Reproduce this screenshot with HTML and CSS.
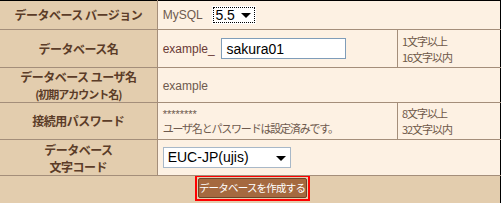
FILE: index.html
```html
<!DOCTYPE html>
<html lang="ja">
	<head>
		<meta charset="UTF-8">
		<title>データベース作成</title>
		<link rel="stylesheet" href="styles.css">
	</head>
	<body>
		<table class="form-table">
			<colgroup>
				<col class="col-label">
				<col class="col-value">
				<col class="col-note">
			</colgroup>
			<tr class="row-version">
				<th>データベース バージョン</th>
				<td colspan="2">
					<span class="prefix">MySQL</span>
					<span class="select select-version">5.5<span class="arrow"></span></span>
				</td>
			</tr>
			<tr class="row-name">
				<th>データベース名</th>
				<td>
					<span class="prefix prefix-name">example_</span>
					<input class="text-input" type="text" value="sakura01">
				</td>
				<td class="note">1文字以上<br>16文字以内</td>
			</tr>
			<tr class="row-user">
				<th class="two-line">データベース ユーザ名<br><span class="sub">(初期アカウント名)</span></th>
				<td colspan="2"><span class="prefix">example</span></td>
			</tr>
			<tr class="row-pass">
				<th>接続用パスワード</th>
				<td>
					<div class="stars">********</div>
					<div class="small">ユーザ名とパスワードは設定済みです。</div>
				</td>
				<td class="note">8文字以上<br>32文字以内</td>
			</tr>
			<tr class="row-code">
				<th class="two-line">データベース<br>文字コード</th>
				<td colspan="2">
					<span class="select select-code">EUC-JP(ujis)<span class="arrow"></span></span>
				</td>
			</tr>
			<tr class="row-submit">
				<td colspan="3" class="submit-cell">
					<div class="submit-wrap">
						<span class="focus-box"><button class="submit">データベースを作成する</button></span>
					</div>
				</td>
			</tr>
		</table>
	</body>
</html>
```

FILE: styles.css
```css
body {
	margin: 0;
	background-color: #ffffff;
	font-family: "Noto Sans CJK JP", "DejaVu Sans", sans-serif;
}
.form-table {
	width: 501px;
	border-collapse: collapse;
	border-top: 1px solid #000000;
	border-right: 1px solid #000000;
	border-bottom: 1px solid #000000;
	table-layout: fixed;
}
.col-label { width: 157px; }
.col-value { width: 240px; }
.col-note { width: 103px; }
.form-table th,
.form-table td {
	padding: 0;
	border-bottom: 1px solid #a48e7a;
	font-size: 12px;
	line-height: 14px;
	white-space: nowrap;
	overflow: hidden;
}
.form-table th {
	background-color: #e3cdae;
	color: #5b3c28;
	font-weight: bold;
	text-align: center;
	border-right: 1px solid #a48e7a;
	letter-spacing: -0.5px;
}
.form-table th.two-line {
	line-height: 17px;
}
.form-table th.two-line .sub {
	line-height: 16px;
}
.form-table td {
	background-color: #fdf1e3;
	color: #6b4a3a;
	padding-left: 5px;
}
.form-table td.note {
	border-left: 1px solid #a48e7a;
	padding-left: 4px;
	font-size: 11px;
	line-height: 16px;
	color: #6e5848;
	letter-spacing: -1px;
}
.row-version th, .row-version td { height: 28px; }
.row-name th, .row-name td { height: 37px; }
.row-user th, .row-user td { height: 33px; }
.row-pass th, .row-pass td { height: 36px; }
.row-code th, .row-code td { height: 35px; }
.row-submit td { height: 27px; border-bottom: none; }
.prefix {
	font-family: "Liberation Sans", Arial, sans-serif;
	font-size: 12px;
	color: #6e5a4e;
	vertical-align: middle;
}
.prefix-name {
	color: #6a3a36;
	margin-right: 4px;
}
.sub {
	font-size: 11px;
	letter-spacing: -1px;
}
.select {
	display: inline-block;
	position: relative;
	vertical-align: middle;
	box-sizing: border-box;
	height: 18px;
	background-color: #ffffff;
	font-family: "Liberation Sans", Arial, sans-serif;
	font-size: 14px;
	line-height: 16px;
	color: #000000;
	border: 1px solid #a8b8c8;
}
.select-version {
	width: 44px;
	margin-left: 7px;
	padding-left: 2px;
	outline: 1px dotted #000000;
	outline-offset: -2px;
	border-color: #ffffff;
}
.select-code {
	width: 128px;
	height: 21px;
	padding: 1px 0 0 4px;
}
.select-code .arrow {
	top: 8px;
}
.arrow {
	position: absolute;
	right: 4px;
	top: 6px;
	width: 0;
	height: 0;
	border-left: 5px solid transparent;
	border-right: 5px solid transparent;
	border-top: 5px solid #000000;
}
.text-input {
	box-sizing: border-box;
	width: 125px;
	height: 21px;
	padding: 0 4px;
	vertical-align: middle;
	border: 1px solid #7f9db9;
	font-family: "Liberation Sans", Arial, sans-serif;
	font-size: 14px;
	color: #000000;
}
.stars {
	font-family: "Liberation Sans", Arial, sans-serif;
	font-size: 11px;
	line-height: 12px;
	color: #6e5a4e;
	margin-top: 2px;
}
.small {
	font-size: 11px;
	line-height: 16px;
	letter-spacing: -1.2px;
	color: #6e5a4e;
}
.form-table td.submit-cell {
	background-color: #e3cdae;
	padding: 0;
	vertical-align: top;
}
.submit-wrap {
	display: flex;
	justify-content: center;
	padding-left: 4px;
	margin-top: -1px;
}
.focus-box {
	display: flex;
	border: 2px solid #ff0000;
	padding: 1px;
	background-color: #e3cdae;
}
.submit {
	width: 109px;
	height: 20px;
	padding: 0;
	background-color: #a5693f;
	border: 1px solid #6e4426;
	border-radius: 2px;
	color: #ffffff;
	font-family: "Noto Sans CJK JP", sans-serif;
	font-size: 10.5px;
	line-height: 18px;
	letter-spacing: -0.8px;
	white-space: nowrap;
}
```
